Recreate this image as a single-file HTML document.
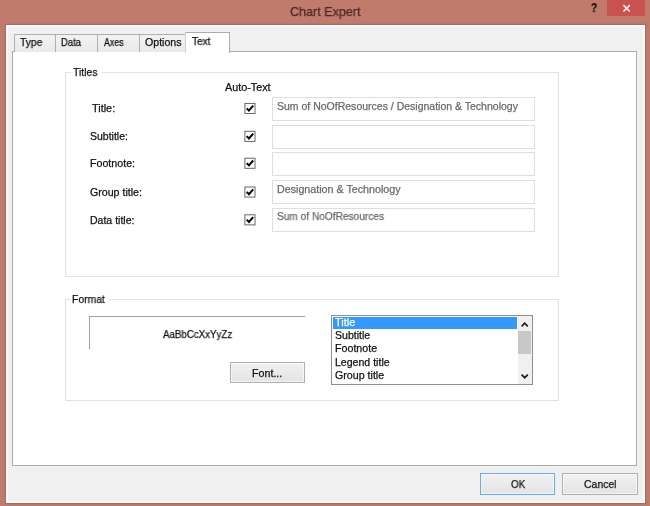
<!DOCTYPE html>
<html><head><meta charset="utf-8"><title>Chart Expert</title>
<style>
*{box-sizing:border-box;margin:0;padding:0}
html,body{width:650px;height:506px;overflow:hidden;background:#c07b6c}
body{font-family:"Liberation Sans",sans-serif;font-size:12px;color:#111;position:relative}
.abs{position:absolute}
.t{position:absolute;white-space:nowrap;line-height:1;transform-origin:0 0;display:block;will-change:transform;-webkit-text-stroke:0.25px currentColor}
#close{left:607px;top:0;width:38px;height:16px;background:#c9524f}
#client{left:6px;top:25px;width:639px;height:477.5px;background:#f0f0f0;box-shadow:0 0 0 1px #a56e67,0 0 0 2px rgba(165,110,103,.3),inset 0 0 0 1px #fffcfa,inset 0 0 0 2px rgba(255,255,255,.55)}
.tab{top:33.6px;height:18px;border:1px solid #b0b0b0;border-bottom:none;background:linear-gradient(#f2f2f2,#eaeaea)}
#tabsel{left:185px;width:45px;top:32px;height:20.5px;background:#fff;border:1px solid #acacac;border-left-color:#cfcfcf;border-bottom:none}
#panel{left:12px;top:51px;width:625px;height:415px;background:#fff;border:1px solid #acacac}
.grp{border:1px solid #e2e2e2}
.gl{background:#fff;height:14px}
.tf{left:272px;width:262.5px;height:24px;border:1px solid #dedede;background:#fff}
.btn{border:1px solid #b0b0b0;background:linear-gradient(#f1f1f1,#e4e4e4);box-shadow:inset 0 0 0 1px rgba(255,255,255,.6)}
</style></head><body>
<div id="close" class="abs"><svg width="38" height="16" viewBox="0 0 38 16"><path d="M16.4 5.1 L22.8 11.5 M22.8 5.1 L16.4 11.5" stroke="#fdf3f2" stroke-width="1.6" fill="none"/></svg></div>
<div id="client" class="abs"></div>
<div id="panel" class="abs"></div>
<div class="abs tab" style="left:14px;width:42px"></div>
<div class="abs tab" style="left:55px;width:43px"></div>
<div class="abs tab" style="left:97px;width:43px"></div>
<div class="abs tab" style="left:139px;width:47px"></div>
<div id="tabsel" class="abs"></div>

<div class="abs grp" style="left:65px;top:71.5px;width:494px;height:205.5px"></div>
<div class="abs gl" style="left:71px;top:65px;width:30.5px"></div>
<svg class="abs" style="left:240px;top:100px" width="20" height="130" viewBox="0 0 20 130"><g transform="translate(4.4,2.9)"><rect x="0.5" y="0.5" width="10.1" height="10.1" fill="#fff" stroke="#585858" stroke-width="0.9"/><path d="M2.3 5.4 L4.5 7.7 L8.8 2.8" stroke="#000" stroke-width="1.95" fill="none"/></g><g transform="translate(4.4,30.8)"><rect x="0.5" y="0.5" width="10.1" height="10.1" fill="#fff" stroke="#585858" stroke-width="0.9"/><path d="M2.3 5.4 L4.5 7.7 L8.8 2.8" stroke="#000" stroke-width="1.95" fill="none"/></g><g transform="translate(4.4,57.7)"><rect x="0.5" y="0.5" width="10.1" height="10.1" fill="#fff" stroke="#585858" stroke-width="0.9"/><path d="M2.3 5.4 L4.5 7.7 L8.8 2.8" stroke="#000" stroke-width="1.95" fill="none"/></g><g transform="translate(4.4,86.5)"><rect x="0.5" y="0.5" width="10.1" height="10.1" fill="#fff" stroke="#585858" stroke-width="0.9"/><path d="M2.3 5.4 L4.5 7.7 L8.8 2.8" stroke="#000" stroke-width="1.95" fill="none"/></g><g transform="translate(4.4,114.3)"><rect x="0.5" y="0.5" width="10.1" height="10.1" fill="#fff" stroke="#585858" stroke-width="0.9"/><path d="M2.3 5.4 L4.5 7.7 L8.8 2.8" stroke="#000" stroke-width="1.95" fill="none"/></g></svg>
<div class="abs tf" style="top:97px"></div>
<div class="abs tf" style="top:125px"></div>
<div class="abs tf" style="top:152px"></div>
<div class="abs tf" style="top:180.4px"></div>
<div class="abs tf" style="top:207.6px"></div>

<div class="abs grp" style="left:65px;top:299px;width:494px;height:102px"></div>
<div class="abs gl" style="left:70.5px;top:292px;width:38px"></div>
<div class="abs" style="left:89px;top:316px;width:216px;height:33px;border-top:1px solid #a0a0a0;border-left:1px solid #a0a0a0"></div>
<div class="abs btn" style="left:230px;top:361.6px;width:75.2px;height:21.6px"></div>

<div class="abs" style="left:331px;top:314.5px;width:202px;height:70px;border:1px solid #8e8e8e;background:#fff">
  <div class="abs" style="left:1.3px;top:1px;width:184px;height:12.8px;background:#3399ff"></div>
  <div class="abs" style="left:185.5px;top:0;width:14.5px;height:68px;background:#f0f0f0"></div>
  <div class="abs" style="left:185.8px;top:15.8px;width:13.4px;height:23px;background:#c8c8c8"></div>
  <svg class="abs" style="left:185px;top:0" width="16" height="68" viewBox="0 0 16 68"><path d="M4.6 10.3 L7.7 7.2 L10.8 10.3 M4.6 58.6 L7.7 61.7 L10.8 58.6" stroke="#1c1c1c" stroke-width="1.7" fill="none"/></svg>
</div>

<div class="abs btn" style="left:480px;top:472.6px;width:75.4px;height:22.2px;border-color:#5fadf5"></div>
<div class="abs btn" style="left:562px;top:472.6px;width:76.4px;height:22.2px"></div>
<span class="t" style="left:590.5px;top:1.5px;font-size:12px;font-weight:bold;color:#1a1210;transform:scaleX(.85)">?</span>
<span id="t_title" class="t" style="left:289.80px;top:4.57px;font-size:13.5px;color:#4a2825;transform:scaleX(0.9307);">Chart Expert</span>
<span id="t_type" class="t" style="left:19.95px;top:37.11px;font-size:10.5px;color:#111;transform:scaleX(0.9818);">Type</span>
<span id="t_data" class="t" style="left:61.02px;top:37.11px;font-size:10.5px;color:#111;transform:scaleX(0.9023);">Data</span>
<span id="t_axes" class="t" style="left:103.60px;top:37.11px;font-size:10.5px;color:#111;transform:scaleX(0.8435);">Axes</span>
<span id="t_opt" class="t" style="left:144.80px;top:37.11px;font-size:10.5px;color:#111;transform:scaleX(1.0099);">Options</span>
<span id="t_text" class="t" style="left:192.26px;top:36.11px;font-size:10.5px;color:#111;transform:scaleX(0.9632);">Text</span>
<span id="t_titles" class="t" style="left:72.85px;top:67.11px;font-size:10.5px;color:#111;transform:scaleX(0.9917);">Titles</span>
<span id="t_auto" class="t" style="left:225.10px;top:82.11px;font-size:10.5px;color:#111;transform:scaleX(1.0260);">Auto-Text</span>
<span id="l1" class="t" style="left:91.54px;top:103.11px;font-size:10.5px;color:#111;transform:scaleX(1.0353);">Title:</span>
<span id="l2" class="t" style="left:90.40px;top:131.11px;font-size:10.5px;color:#111;transform:scaleX(1.0000);">Subtitle:</span>
<span id="l3" class="t" style="left:90.14px;top:158.11px;font-size:10.5px;color:#111;transform:scaleX(1.0152);">Footnote:</span>
<span id="l4" class="t" style="left:90.39px;top:187.11px;font-size:10.5px;color:#111;transform:scaleX(1.0120);">Group title:</span>
<span id="l5" class="t" style="left:90.15px;top:215.11px;font-size:10.5px;color:#111;transform:scaleX(1.0012);">Data title:</span>
<span id="f1" class="t" style="left:276.80px;top:101.11px;font-size:10.5px;color:#6a6a6a;transform:scaleX(1.0002);">Sum of NoOfResources / Designation &amp; Technology</span>
<span id="f4" class="t" style="left:276.84px;top:184.11px;font-size:10.5px;color:#6a6a6a;transform:scaleX(1.0191);">Designation &amp; Technology</span>
<span id="f5" class="t" style="left:277.12px;top:211.11px;font-size:10.5px;color:#6a6a6a;transform:scaleX(0.9655);">Sum of NoOfResources</span>
<span id="t_format" class="t" style="left:72.16px;top:294.11px;font-size:10.5px;color:#111;transform:scaleX(0.9877);">Format</span>
<span id="t_sample" class="t" style="left:163.10px;top:329.11px;font-size:10.5px;color:#111;transform:scaleX(0.9266);">AaBbCcXxYyZz</span>
<span id="t_font" class="t" style="left:252.04px;top:368.11px;font-size:10.5px;color:#111;transform:scaleX(1.0179);">Font...</span>
<span id="i1" class="t" style="left:335.04px;top:317.11px;font-size:10.5px;color:#fff;transform:scaleX(1.0453);">Title</span>
<span id="i2" class="t" style="left:334.80px;top:330.11px;font-size:10.5px;color:#111;transform:scaleX(1.0059);">Subtitle</span>
<span id="i3" class="t" style="left:334.54px;top:343.11px;font-size:10.5px;color:#111;transform:scaleX(1.0161);">Footnote</span>
<span id="i4" class="t" style="left:334.55px;top:357.11px;font-size:10.5px;color:#111;transform:scaleX(1.0057);">Legend title</span>
<span id="i5" class="t" style="left:334.79px;top:370.11px;font-size:10.5px;color:#111;transform:scaleX(1.0147);">Group title</span>
<span id="t_ok" class="t" style="left:510.53px;top:479.11px;font-size:10.5px;color:#111;transform:scaleX(0.9379);">OK</span>
<span id="t_cancel" class="t" style="left:583.60px;top:479.11px;font-size:10.5px;color:#111;transform:scaleX(0.9937);">Cancel</span>
</body></html>
